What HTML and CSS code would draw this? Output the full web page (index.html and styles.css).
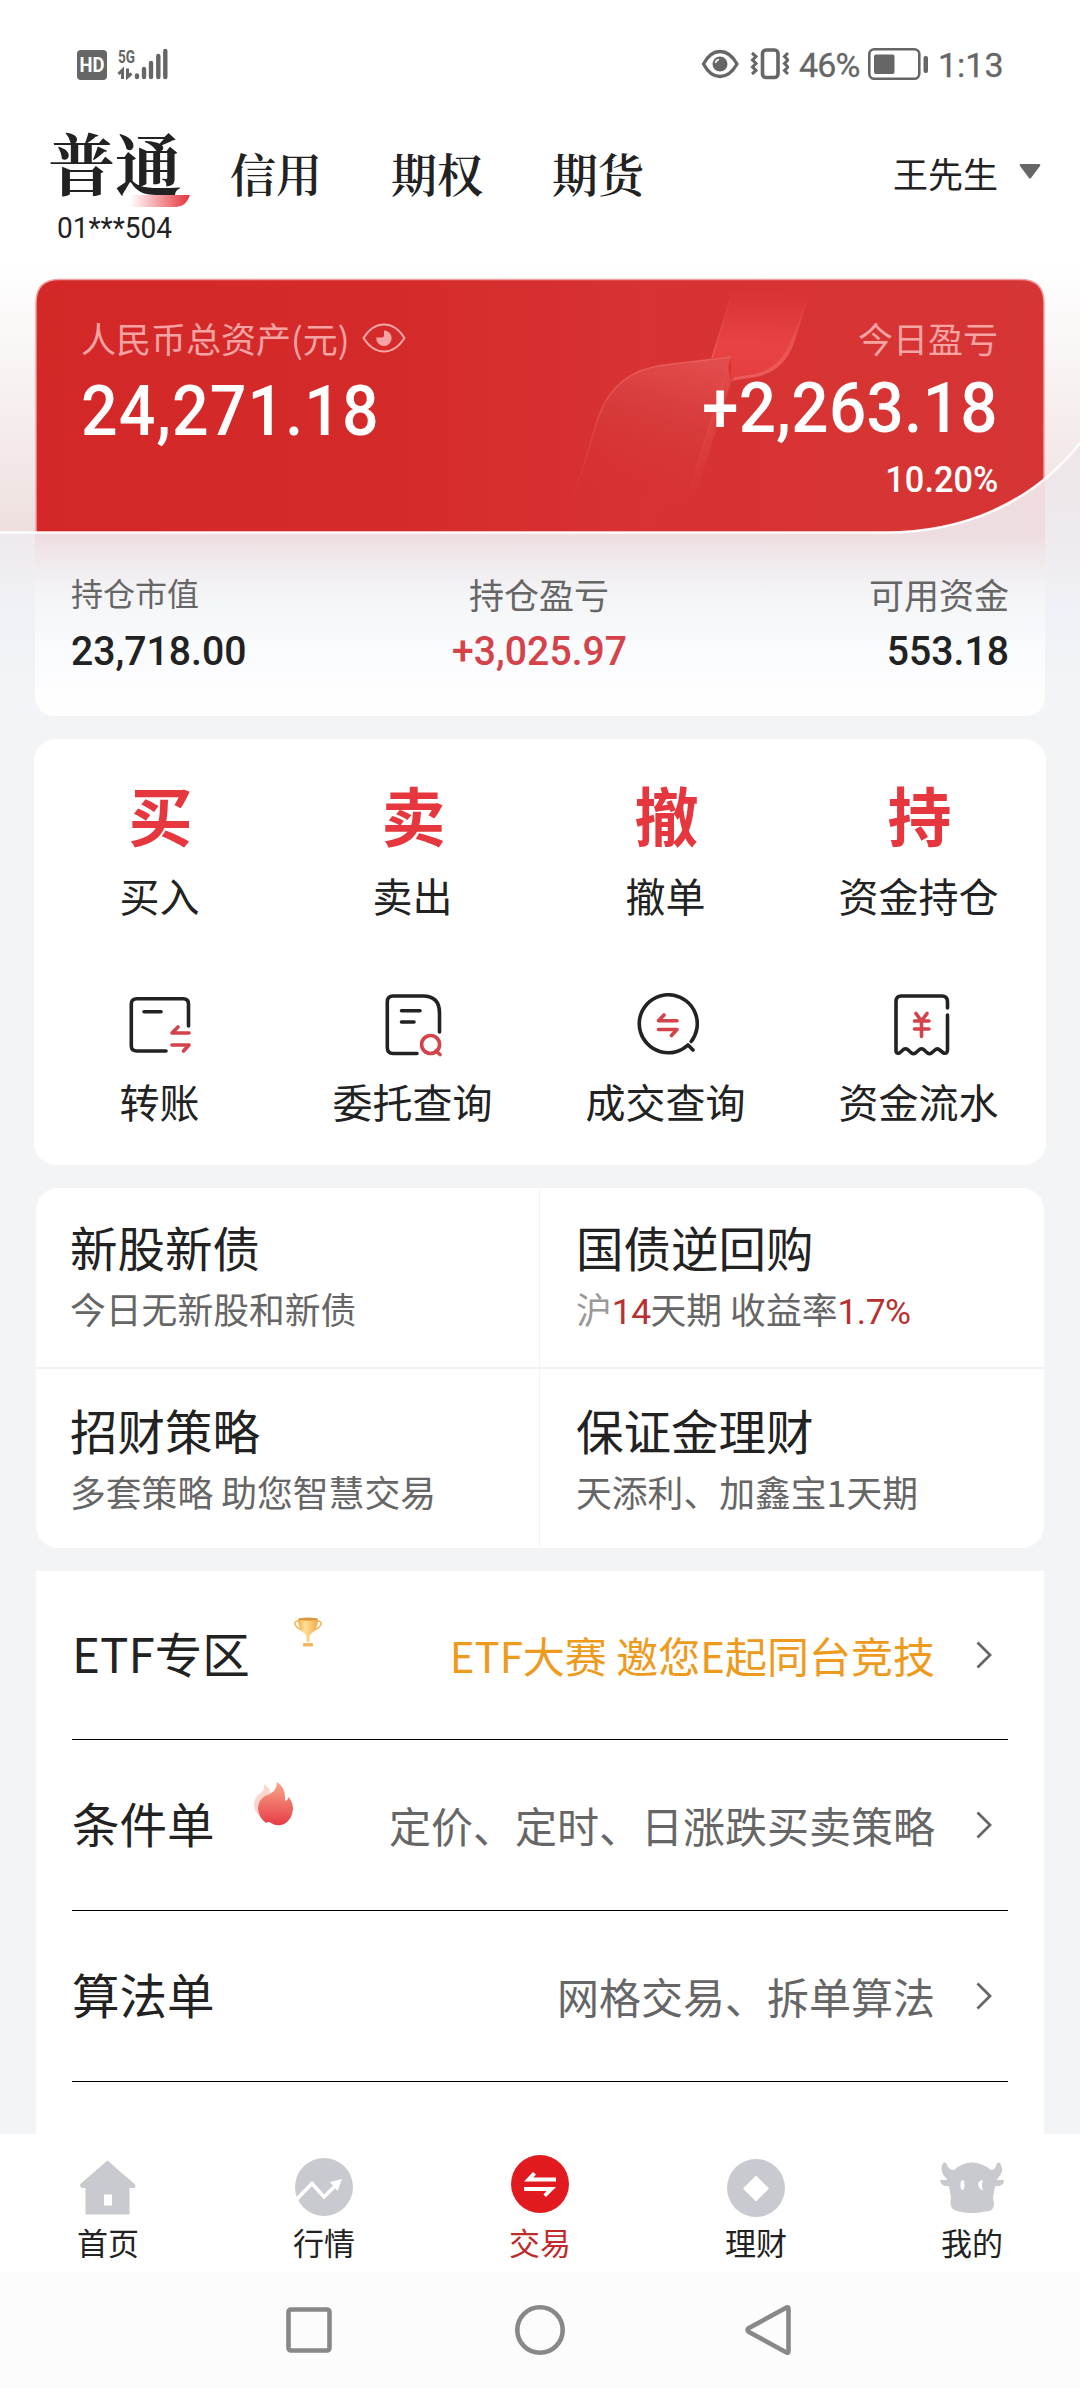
FILE: index.html
```html
<!DOCTYPE html>
<html lang="zh-CN">
<head>
<meta charset="utf-8">
<title>交易</title>
<link rel="stylesheet" href="styles.css">
</head>
<body>
<div class="screen">
  <div class="status">
    <svg class="status-left" width="92" height="60" viewBox="77 34 92 60">
      <rect x="77" y="50" width="30" height="30" rx="4" fill="#666"/>
      <text x="92" y="71.500" text-anchor="middle" textLength="25" lengthAdjust="spacingAndGlyphs" class="hd">HD</text>
      <text x="118" y="62.500" textLength="17" lengthAdjust="spacingAndGlyphs" class="net">5G</text>
      <path d="M122.500 79V70L118.500 74M127.500 68.500V77L131.500 73.500" fill="none" stroke="#666" stroke-width="3"/>
      <g stroke="#666" stroke-width="4.400" stroke-linecap="round"><path d="M137 75.500V77M144 69V77M151 63V77M158.300 56V77M165.300 51V77"/></g>
    </svg>
    <div class="status-right">
      <svg width="88" height="34" viewBox="701 47 88 34" fill="none" stroke="#666">
        <path d="M703.500 64Q710 51.500 720 51.500T737 64Q730 76.500 720 76.500T703.500 64Z" stroke-width="3.300"/>
        <circle cx="720" cy="64" r="7.500" fill="#666" stroke="none"/><path d="M715.500 63Q716 60 719 59.500" stroke="#fff" stroke-width="1.500"/>
        <rect x="762.500" y="50" width="15.500" height="27.500" rx="3.500" stroke-width="3.600"/>
        <path d="M752 53L756 56.500L752.500 60L756 63.500L752.500 67L756 70.500L752 74M788 53L784.500 56.500L788 60L784.500 63.500L788 67L784.500 70.500L788 74" stroke-width="3"/>
      </svg>
      <span class="pct">46%</span>
      <svg width="61" height="34" viewBox="868 47 61 34"><rect x="869.300" y="49.300" width="50" height="29.500" rx="5" fill="none" stroke="#666" stroke-width="2.600"/><rect x="874" y="54.500" width="20.500" height="19.500" rx="2" fill="#666"/><rect x="923.500" y="56" width="4.500" height="17" rx="2" fill="#666"/></svg>
      <span class="clock">1:13</span>
    </div>
  </div>

  <header class="header">
    <nav class="tabs">
      <div class="tab-on"><span class="tab-name">普通</span><svg class="swoosh" width="60" height="12" viewBox="0 0 60 12"><defs><linearGradient id="sw"><stop offset="0" stop-color="#e6383e" stop-opacity="0"/><stop offset="1" stop-color="#e6323a"/></linearGradient></defs><path d="M0 0H60Q56 12 46 12H0Z" fill="url(#sw)"/></svg><span class="acct">01***504</span></div>
      <span class="tab">信用</span><span class="tab">期权</span><span class="tab">期货</span>
    </nav>
    <div class="user">王先生<svg width="22" height="15" viewBox="0 0 22 15"><path d="M2 0H20Q22 0 21 2L12 14Q11 15 10 14L1 2Q0 0 2 0Z" fill="#666"/></svg></div>
  </header>

  <section class="hero">
    <svg class="hero-bg" width="1080" height="454" viewBox="0 262 1080 454">
      <defs>
        <linearGradient id="side" x1="0" y1="0" x2="0" y2="1"><stop offset="0" stop-color="#fff"/><stop offset=".35" stop-color="#f9f5f4"/><stop offset="1" stop-color="#eedfdf"/></linearGradient>
        <linearGradient id="red"><stop offset="0" stop-color="#d42828"/><stop offset=".35" stop-color="#d52a2a"/><stop offset=".6" stop-color="#d83232"/><stop offset="1" stop-color="#d63535"/></linearGradient>
        <linearGradient id="outer" gradientUnits="userSpaceOnUse" x1="0" y1="440" x2="0" y2="716"><stop offset="0" stop-color="#efe6e8"/><stop offset=".36" stop-color="#eeeaee"/><stop offset=".6" stop-color="#f0f1f6"/><stop offset="1" stop-color="#f3f5f8"/></linearGradient>
        <linearGradient id="glass" gradientUnits="userSpaceOnUse" x1="0" y1="480" x2="0" y2="716"><stop offset="0" stop-color="#efdcdf"/><stop offset=".23" stop-color="#eedde0"/><stop offset=".37" stop-color="#f1ecef"/><stop offset=".5" stop-color="#f4f5f7"/><stop offset=".72" stop-color="#fafbfd"/><stop offset="1" stop-color="#fff"/></linearGradient>
        <linearGradient id="petalA" x1="0" y1="0" x2="0" y2="1"><stop offset="0" stop-color="#ea4444" stop-opacity="0"/><stop offset=".6" stop-color="#ea4444" stop-opacity=".9"/><stop offset="1" stop-color="#e43e3e"/></linearGradient>
        <linearGradient id="petalB" x1=".7" y1="0" x2=".4" y2="1"><stop offset="0" stop-color="#e65656" stop-opacity=".7"/><stop offset=".4" stop-color="#d84242" stop-opacity=".6"/><stop offset="1" stop-color="#d63535" stop-opacity="0"/></linearGradient>
        <linearGradient id="edgeUp" x1="0" y1="0" x2="0" y2="1"><stop offset="0" stop-color="#f07070" stop-opacity="0"/><stop offset="1" stop-color="#f07070" stop-opacity=".6"/></linearGradient>
        <linearGradient id="edgeDn" x1="0" y1="0" x2="0" y2="1"><stop offset="0" stop-color="#f07070" stop-opacity=".6"/><stop offset="1" stop-color="#f07070" stop-opacity="0"/></linearGradient>
        <clipPath id="upper"><path d="M0 262H1080V443C1030 505 960 532 885 532H0Z"/></clipPath>
      </defs>
      <path d="M0 440H1080V694Q1080 716 1058 716H22Q0 716 0 694Z" fill="url(#outer)"/>
      <path d="M35 480H1045V694Q1045 716 1023 716H57Q35 716 35 694Z" fill="url(#glass)"/>
      <g clip-path="url(#upper)">
        <rect x="0" y="262" width="1080" height="272" fill="url(#side)"/>
        <path d="M36 540V303Q36 279.500 59 279.500H1021Q1044 279.500 1044 303V540Z" fill="url(#red)" stroke="#f0a0a0" stroke-width="1.500"/>
        <path d="M733 290L712 358L731 357V380L752 378Q785 373 795 340L809 297Z" fill="url(#petalA)"/>
        <path d="M733 290L712 358" stroke="url(#edgeUp)" stroke-width="1.500" fill="none"/>
        <path d="M808 297Q800 325 794 343Q783 373 754 377L731 381L735 377L755 374Q779 368 789 345Q800 320 808 297Z" fill="url(#edgeUp)"/>
        <path d="M731 357L664 365Q614 371 598 418L573 500H688Z" fill="url(#petalB)"/>
        <path d="M731 357L664 365Q614 371 598 418L573 500" stroke="url(#edgeDn)" stroke-width="1.500" fill="none"/>
        <path d="M731 382L695 498H686L728 366Z" fill="url(#edgeDn)" opacity=".65"/>
      </g>
      <path d="M0 532.500H885C960 532.500 1030 506 1080 443" fill="none" stroke="#fff" stroke-opacity=".9" stroke-width="2.600"/>
    </svg>
    <div class="totals">
      <div class="total">
        <div class="cap">人民币总资产(元)<svg width="44" height="30" viewBox="0 0 44 30"><path d="M1.500 15Q10 1.500 22 1.500T42.500 15Q34 28.500 22 28.500T1.500 15Z" fill="none" stroke="#f6a3a3" stroke-width="2"/><path d="M22 7.500A7.700 7.700 0 1 1 14.300 14.500H20Q22 14.500 22 12.500Z" fill="#f6a3a3"/></svg></div>
        <div class="big">24,271.18</div>
      </div>
      <div class="total right">
        <div class="cap">今日盈亏</div>
        <div class="big gain">+2,263.18</div>
        <div class="rate">10.20%</div>
      </div>
    </div>
    <div class="stats">
      <div class="stat"><span class="k small">持仓市值</span><span class="v">23,718.00</span></div>
      <div class="stat mid"><span class="k">持仓盈亏</span><span class="v up">+3,025.97</span></div>
      <div class="stat end"><span class="k">可用资金</span><span class="v">553.18</span></div>
    </div>
  </section>

  <section class="actions">
    <div class="act"><b>买</b><span>买入</span></div>
    <div class="act"><b>卖</b><span>卖出</span></div>
    <div class="act"><b>撤</b><span>撤单</span></div>
    <div class="act"><b>持</b><span>资金持仓</span></div>
    <div class="act"><svg class="line-icon" viewBox="0 0 64 64"><path d="M59.500 33V11Q59.500 5.800 54 5.800H8Q2.300 5.800 2.300 11V53Q2.300 58 8 58H37M15 18.700H32"/><path class="r" d="M60 40H43L49 34M43 52H60L54.500 58"/></svg><span>转账</span></div>
    <div class="act"><svg class="line-icon" viewBox="0 0 64 64"><path d="M57.500 39V20Q57.500 3 41 3H11Q5.300 3 5.300 9V54.500Q5.300 60.500 11 60.500H35M19.500 17.700H38M19.500 29H32"/><path class="r" d="M54 58L58 61.500"/><circle class="r" cx="48.600" cy="51.500" r="9"/></svg><span>委托查询</span></div>
    <div class="act"><svg class="line-icon" viewBox="0 0 64 64"><path d="M56.200 48.500A29 29 0 1 0 53 52L58 57"/><path class="r" d="M42 27.700H23.500L29 22M23.500 36.500H42L36.500 42.500"/></svg><span>成交查询</span></div>
    <div class="act"><svg class="line-icon" viewBox="0 0 64 64"><path d="M59.500 15V9Q59.500 3 54 3H13Q8 3 8 9V58Q8 61 11.500 60L15.500 56.500Q17.500 55 19.500 56.500L23.500 60Q25.500 61.500 27.500 60L31.500 56.500Q33.500 55 35.500 56.500L39.500 60Q41.500 61.500 43.500 60L47 57Q49 55 51 56.500L55.500 60Q59.500 61 59.500 57V22"/><path class="r" d="M28 20.500L33.500 28L39 20.500M26.500 28H41M26.500 36H41M33.500 28V43.500"/></svg><span>资金流水</span></div>
  </section>

  <section class="promos">
    <div class="promo"><h3>新股新债</h3><p>今日无新股和新债</p></div>
    <div class="promo"><h3>国债逆回购</h3><p><i>沪</i><em>14</em>天期 收益率<em>1.7%</em></p></div>
    <div class="promo low"><h3>招财策略</h3><p>多套策略 助您智慧交易</p></div>
    <div class="promo low"><h3>保证金理财</h3><p>天添利、加鑫宝1天期</p></div>
  </section>

  <section class="list">
    <div class="row"><span class="name">ETF专区</span>
      <svg class="badge trophy" width="28" height="30" viewBox="0 0 28 30"><defs><linearGradient id="gold" x1="0" x2="1"><stop offset="0" stop-color="#f2b04a"/><stop offset=".35" stop-color="#ffdf98"/><stop offset="1" stop-color="#f5ab45"/></linearGradient></defs><path d="M5 4Q0 4 1 7Q2 11 8 13M23 4Q28 4 27 7Q26 11 20 13" fill="none" stroke="#efb45c" stroke-width="1.500"/><path d="M4 2H24Q24 12 18 16Q15.500 18 15.500 20V25H12.500V20Q12.500 18 10 16Q4 12 4 2Z" fill="url(#gold)"/><ellipse cx="14" cy="2.200" rx="10" ry="1.600" fill="#d9963c"/><rect x="9" y="26" width="10" height="3.500" rx="1" fill="#eeb760"/></svg>
      <span class="hint hot">ETF大赛 邀您E起同台竞技</span><svg class="chev" viewBox="0 0 16 28"><path d="M1.500 1.500L14 14L1.500 26.500"/></svg></div>
    <div class="row"><span class="name">条件单</span>
      <svg class="badge flame" width="40" height="44" viewBox="0 0 40 44"><defs><linearGradient id="fire" x1="0" y1="0" x2="0" y2="1"><stop offset="0" stop-color="#f9a88a"/><stop offset="1" stop-color="#e63b46"/></linearGradient></defs><path d="M11 2Q17 6 18 12L12 38Q1 32 1 23Q1 15 9 10Q12 7 11 2Z" fill="#f9b9ae" opacity=".6"/><path d="M24 0Q32 5 32 15V19Q35 18 35.500 15Q40 20 40 27Q39 38 31 42Q24 45 18 41Q15 39 13 41Q6 36 5 27Q5 18 12 14Q18 12 21 9Q24 5 24 0Z" fill="url(#fire)"/></svg>
      <span class="hint">定价、定时、日涨跌买卖策略</span><svg class="chev" viewBox="0 0 16 28"><path d="M1.500 1.500L14 14L1.500 26.500"/></svg></div>
    <div class="row"><span class="name">算法单</span><span class="hint">网格交易、拆单算法</span><svg class="chev" viewBox="0 0 16 28"><path d="M1.500 1.500L14 14L1.500 26.500"/></svg></div>
  </section>

  <nav class="tabbar">
    <div class="item"><svg width="64" height="64" viewBox="0 0 64 64"><path fill-rule="evenodd" d="M31.500 6.500L58.500 30Q60.500 31 58.500 34H53.500V60.500H9.500V34H5.500Q2.500 31 5.500 29ZM28 40.500V51.500H36V40.500Z"/></svg><span>首页</span></div>
    <div class="item"><svg width="64" height="64" viewBox="0 0 64 64"><circle cx="32" cy="33" r="29"/><path d="M4 46L20 29.500L32 43L44 31" fill="none" stroke="#fff" stroke-width="3.600"/><path d="M38 28L50 25L45.500 37Z" fill="#fff"/></svg><span>行情</span></div>
    <div class="item on"><svg width="64" height="64" viewBox="0 0 64 64"><circle cx="32" cy="30" r="29"/><g fill="#fff"><path d="M16 27.500L25 18L28 20.500L25.500 23.500H48V27.500ZM16 33H48L38 43L35.500 40.500L38.500 37H16Z"/></g></svg><span>交易</span></div>
    <div class="item"><svg width="64" height="64" viewBox="0 0 64 64"><circle cx="32" cy="34" r="29"/><path d="M32 21.500L45 34.500L32 47.500L19 34.500Z" fill="#fff"/></svg><span>理财</span></div>
    <div class="item"><svg width="64" height="64" viewBox="0 0 64 64"><path d="M3 9Q6 7 8 13Q10 16 14 16Q22 8.500 32 8.500T51 16Q55 16 56 12Q57 7 60 9Q65 17 58 24L57 26L64 26Q64 33 55 32L53 44Q57 58 45 57.500Q32 60.500 19 57.500Q8 56 11 44L9 32Q1 33 0 26L7 26L6 24Q-1 17 3 9Z"/><ellipse cx="22.500" cy="31" rx="2" ry="5" fill="#fff"/><path d="M43 26Q37 27 38.500 32Q40 36 43 36Q41 31 43 26Z" fill="#fff"/></svg><span>我的</span></div>
  </nav>
  <div class="sysnav">
    <svg width="52" height="52" viewBox="0 0 52 52"><rect x="5.500" y="5.500" width="41" height="41" rx="2.500"/></svg>
    <svg width="52" height="52" viewBox="0 0 52 52"><circle cx="26" cy="26" r="22.700"/></svg>
    <svg width="52" height="52" viewBox="2 0 52 52"><path d="M43.500 3.500L6 24Q3 26 6 28L43.500 48.500Q45.500 49.500 45.500 47V5Q45.500 2.500 43.500 3.500Z"/></svg>
  </div>
</div>
</body>
</html>
```

FILE: styles.css
```css
* { box-sizing: border-box; margin: 0; padding: 0; }
body { background: #f3f4f6; font-family: "Noto Sans CJK SC", sans-serif; color: #222; }
svg { display: block; flex: none; }
.screen { width: 1080px; height: 2388px; overflow: hidden; display: flex; flex-direction: column; }

.status { height: 120px; padding: 8px 78px 0 77px; background: #fff; display: flex; align-items: center; justify-content: space-between; font: 400 34px/34px Roboto, sans-serif; color: #666; }
.hd { font: 700 20px Roboto, sans-serif; fill: #fff; }
.net { font: 700 19px Roboto, sans-serif; fill: #666; }
.status-right { display: flex; align-items: center; }
.pct { width: 61px; margin: 2px 8px 0 10px; letter-spacing: -.8px; -webkit-text-stroke: .3px #666; }
.clock { width: 64px; margin: 2px 0 0 9px; -webkit-text-stroke: .3px #666; white-space: nowrap; }

.header { height: 142px; background: #fff; display: flex; justify-content: space-between; padding: 0 39px 0 48px; }
.tabs { display: flex; font-family: "Noto Serif CJK SC", "Noto Serif SC", "Noto Sans CJK SC", serif; }
.tab-on { width: 182px; padding-top: 7px; position: relative; display: flex; flex-direction: column; }
.tab-name { font-size: 67px; line-height: 68px; font-weight: 700; white-space: nowrap; }
.swoosh { position: absolute; left: 82px; top: 75px; }
.acct { font: 400 30px/30px Roboto, sans-serif; align-self: flex-start; transform: scaleX(.935); transform-origin: left; margin: 18px 0 0 9px; }
.tab { font-size: 46px; line-height: 50px; font-weight: 600; width: 161px; padding-top: 27px; }
.user { display: flex; align-items: flex-start; font-size: 35px; line-height: 40px; padding-top: 33px; gap: 21px; }
.user svg { margin-top: 11px; }

.hero { position: relative; height: 454px; }
.hero-bg { position: absolute; left: 0; top: 0; }
.totals { position: relative; height: 270px; padding: 56px 82px 0 81px; display: flex; justify-content: space-between; color: #fff; }
.total { display: flex; flex-direction: column; align-items: flex-start; }
.total.right { align-items: flex-end; }
.cap { font-size: 35px; line-height: 40px; color: #f6a3a3; display: flex; align-items: center; gap: 12px; }
.big { font: 500 71px/72px Roboto, sans-serif; letter-spacing: 1.2px; margin-top: 17px; transform: scaleX(.908); transform-origin: left; }
.big.gain { margin-top: 14px; letter-spacing: .3px; transform: scaleX(.925); transform-origin: right; }
.rate { font: 500 36px/36px Roboto, sans-serif; margin-top: 18px; transform: scaleX(.955); transform-origin: right; }
.stats { position: relative; display: grid; grid-template-columns: 1fr 1fr 1fr; padding: 42px 71px 0; }
.stat { display: flex; flex-direction: column; align-items: flex-start; }
.stat.mid { align-items: center; }
.stat.end { align-items: flex-end; }
.k { font-size: 35px; line-height: 40px; color: #666; }
.mid .k { margin-right: 2px; }
.small { font-size: 32px; line-height: 36px; padding-bottom: 4px; }
.v { font: 500 41px/42px Roboto, sans-serif; margin-top: 16px; transform: scaleX(.955); transform-origin: left; }
.mid .v { transform-origin: center; }
.end .v { transform-origin: right; }
.up { color: #d4434a; }

.actions { margin: 23px 34px 0; height: 426px; background: #fff; border-radius: 22px; display: grid; grid-template-columns: repeat(4, 1fr); grid-template-rows: 206px 220px; }
.act { display: flex; flex-direction: column; align-items: center; padding-top: 42px; font-size: 40px; line-height: 48px; }
.act b { font-size: 64px; line-height: 64px; font-weight: 700; color: #e6373e; }
.act span { margin-top: 26px; margin-right: 2px; }
.line-icon { width: 64px; height: 64px; margin-top: 6px; fill: none; stroke: #222; stroke-width: 3.600; stroke-linecap: round; stroke-linejoin: round; }
.line-icon + span { margin-top: 20px; }
.r { stroke: #d4434a; }

.promos { margin: 23px 36px 0; height: 360px; border-radius: 22px; overflow: hidden; display: grid; grid-template-columns: 503px 504px; grid-template-rows: 179px 179px; gap: 2px 1px; background: #f3f3f4; }
.promo { background: #fff; padding: 32px 0 0 34px; }
.promo.low { padding-top: 34px; }
.promo:nth-child(even) { padding-left: 36px; }
.promo h3 { font-size: 47.500px; line-height: 54px; font-weight: 400; }
.promo p { font-size: 35.800px; line-height: 44px; color: #666; margin-top: 12px; white-space: pre; }
.promo i { font-style: normal; color: #999; }
.promo em { font: 400 35.500px/1 Roboto, sans-serif; color: #b93030; letter-spacing: -.6px; }

.list { margin: 23px 36px 0; height: 563px; background: #fff; padding: 0 36px; flex: none; }
.row { height: 171px; border-bottom: 1px solid #000; display: flex; align-items: center; padding-right: 16px; position: relative; }
.row:first-child { height: 169px; }
.name { font-size: 47.500px; line-height: 60px; padding-bottom: 4px; }
.badge { position: absolute; }
.trophy { left: 222px; top: 46px; }
.flame { left: 181px; top: 42px; }
.hint { margin-left: auto; font-size: 42px; line-height: 50px; color: #666; padding-bottom: 1px; }
.hot { color: #ee9a1c; }
.chev { width: 16px; height: 28px; margin-left: 41px; fill: none; stroke: #666; stroke-width: 2.800; }

.tabbar { height: 138px; background: #fff; display: grid; grid-template-columns: repeat(5, 1fr); flex: none; }
.item { display: flex; flex-direction: column; align-items: center; padding-top: 20px; font-size: 31px; line-height: 36px; }
.item svg { fill: #c9cad0; }
.item span { margin-top: 6px; }
.on { color: #c02a2a; }
.on svg { fill: #e01a1e; }
.sysnav { height: 116px; background: #fcfcfc; display: flex; justify-content: center; gap: 179px; padding-top: 32px; flex: none; }
.sysnav svg { fill: none; stroke: #888; stroke-width: 4.600; }
```
